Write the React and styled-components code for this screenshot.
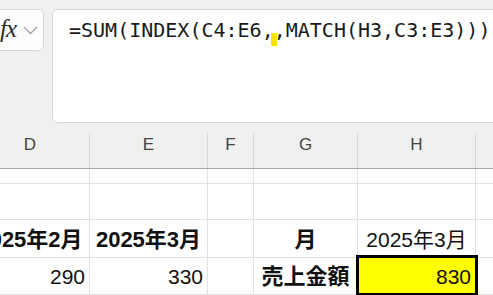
import React from 'react';
import styled, { createGlobalStyle } from 'styled-components';

const GlobalStyle = createGlobalStyle`
  body {
    margin: 0;
    background: #f0f0f0;
    overflow: hidden;
  }
`;

const Page = styled.div`
  width: 493px;
  height: 295px;
  overflow: hidden;
  background: #f0f0f0;
  font-family: "Liberation Sans", "Noto Sans CJK JP", sans-serif;
`;

const FormulaBar = styled.div`
  display: flex;
  align-items: flex-start;
  height: 123px;
  padding-top: 9px;
  box-sizing: border-box;
`;

const FxBox = styled.div`
  display: flex;
  align-items: center;
  gap: 7px;
  flex: none;
  width: 55px;
  height: 42px;
  margin-left: -11px;
  padding-left: 10px;
  box-sizing: border-box;
  background: #fdfdfd;
  border: 1px solid #d6d6d6;
  border-radius: 5px;
`;

const Fx = styled.span`
  font-family: "Liberation Serif", "DejaVu Serif", serif;
  font-style: italic;
  font-size: 25px;
  line-height: 1;
  color: #2b2b2b;
  letter-spacing: -1px;
  margin-top: -4px;
`;

const FormulaBox = styled.div`
  flex: none;
  width: 470px;
  height: 114px;
  margin-left: 8px;
  padding: 6px 0 0 16px;
  box-sizing: border-box;
  background: #ffffff;
  border: 1px solid #d6d6d6;
  border-radius: 6px;
  font-family: "DejaVu Sans Mono", "Liberation Mono", monospace;
  font-size: 20px;
  line-height: 28px;
  color: #1a1a1a;
  white-space: nowrap;
`;

const Caret = styled.span`
  position: relative;
  display: inline-block;
  width: 0;
  height: 13px;
  vertical-align: -9px;

  &::before {
    content: '';
    position: absolute;
    left: -3px;
    top: 0;
    width: 6px;
    height: 13px;
    background: #ffe100;
  }
`;

const Sheet = styled.div`
  margin-left: -29px;
  width: 560px;
`;

const HeaderRow = styled.div`
  display: flex;
  height: 46px;
  padding-top: 10px;
  box-sizing: border-box;
  border-bottom: 1px solid #a8a8a8;
`;

const HeaderCell = styled.div`
  flex: none;
  width: ${(p) => p.$w}px;
  display: flex;
  justify-content: center;
  align-items: flex-start;
  padding-top: 2px;
  box-sizing: border-box;
  border-right: 1px solid #d8d8d8;
  font-size: 17px;
  line-height: 20px;
  color: #444;
`;

const Row = styled.div`
  display: flex;
  height: ${(p) => p.$h}px;
  box-sizing: border-box;
  background: #ffffff;
  border-bottom: 1px solid #e1e1e1;
`;

const Cell = styled.div`
  position: relative;
  flex: none;
  width: ${(p) => p.$w}px;
  display: flex;
  align-items: flex-end;
  justify-content: ${(p) => (p.$align === 'right' ? 'flex-end' : 'center')};
  padding: 0 4px 5px 0;
  padding-left: ${(p) => (p.$align === 'right' ? 0 : 4)}px;
  box-sizing: border-box;
  border-right: 1px solid #e1e1e1;
  background: ${(p) => (p.$mark ? '#ffff00' : 'transparent')};
  font-size: ${(p) => (p.$bold ? 22 : 21)}px;
  font-weight: ${(p) => (p.$bold ? 700 : 400)};
  line-height: 24px;
  color: #111;
  white-space: nowrap;

  ${(p) =>
    p.$mark &&
    `
    &::after {
      content: '';
      position: absolute;
      top: -3px;
      left: -2px;
      right: -3px;
      bottom: -2px;
      border: 3px solid #000;
      z-index: 1;
    }
  `}
`;

const columns = [
  { key: 'D', w: 119 },
  { key: 'E', w: 118 },
  { key: 'F', w: 46 },
  { key: 'G', w: 104 },
  { key: 'H', w: 118 },
  { key: '', w: 120 },
];

const rows = [
  { h: 15, cells: [] },
  { h: 36, cells: [] },
  {
    h: 38,
    cells: [
      { text: '2025年2月', bold: true },
      { text: '2025年3月', bold: true },
      {},
      { text: '月', bold: true },
      { text: '2025年3月' },
      {},
    ],
  },
  {
    h: 37,
    cells: [
      { text: '290', align: 'right' },
      { text: '330', align: 'right' },
      {},
      { text: '売上金額', bold: true },
      { text: '830', align: 'right', mark: true },
      {},
    ],
  },
];

const Chevron = () => (
  <svg width="15" height="9" viewBox="0 0 15 9">
    <polyline points="1,1 7.5,7.5 14,1" fill="none" stroke="#a3a3a3" strokeWidth="1.3" />
  </svg>
);

const App = () => (
  <Page>
    <GlobalStyle />
    <FormulaBar>
      <FxBox>
        <Fx>fx</Fx>
        <Chevron />
      </FxBox>
      <FormulaBox>
        =SUM(INDEX(C4:E6,
        <Caret />
        ,MATCH(H3,C3:E3)))
      </FormulaBox>
    </FormulaBar>
    <Sheet>
      <HeaderRow>
        {columns.map((c, i) => (
          <HeaderCell key={i} $w={c.w}>
            {c.key}
          </HeaderCell>
        ))}
      </HeaderRow>
      {rows.map((r, ri) => (
        <Row key={ri} $h={r.h}>
          {columns.map((c, ci) => {
            const cell = r.cells[ci] || {};
            return (
              <Cell key={ci} $w={c.w} $align={cell.align} $bold={cell.bold} $mark={cell.mark}>
                {cell.text}
              </Cell>
            );
          })}
        </Row>
      ))}
    </Sheet>
  </Page>
);

export default App;
